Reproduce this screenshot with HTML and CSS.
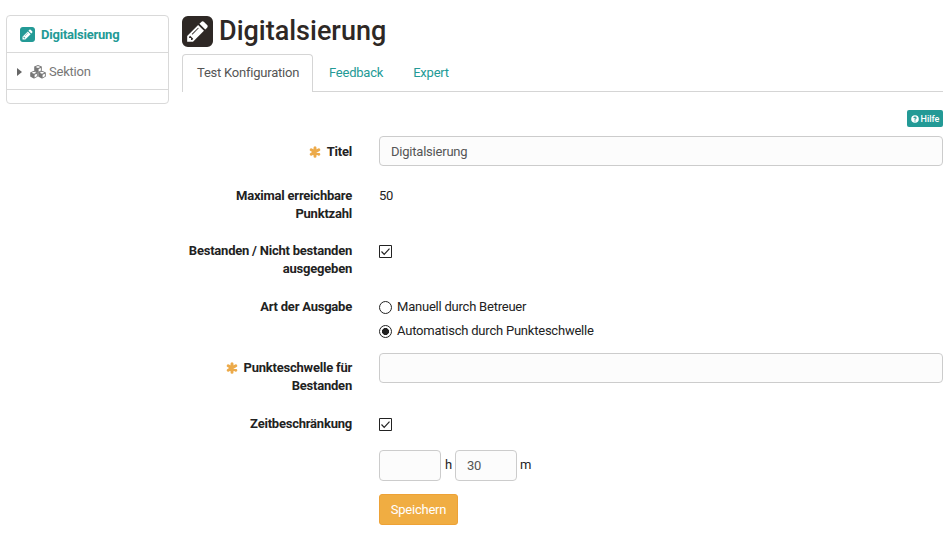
FILE: index.html
```html
<!DOCTYPE html>
<html lang="de">
<head>
<meta charset="utf-8">
<title>Digitalsierung</title>
<link rel="stylesheet" href="styles.css">
</head>
<body>
<svg class="defs" aria-hidden="true">
  <symbol id="pencil" viewBox="0 128 1536 1536"><path d="M404 1108l152 152-52 52h-56v-96h-96v-56zm414-390q14 13-3 30l-291 291q-17 17-30 3-14-13 3-30l291-291q17-17 30-3zm-274 690l544-544-288-288-544 544v288h288zm608-608l92-92q28-28 28-68t-28-68l-152-152q-28-28-68-28t-68 28l-92 92zm384-384v960q0 119-84.5 203.5t-203.5 84.5h-960q-119 0-203.5-84.5t-84.5-203.5v-960q0-119 84.5-203.5t203.5-84.5h960q119 0 203.5 84.5t84.5 203.5z"/></symbol>
  <symbol id="star" viewBox="0 0 12 12"><path d="M6 1.8v8.4M2.2 3.8l7.6 4.4M9.8 3.8L2.2 8.2" stroke="currentColor" stroke-width="3" stroke-linecap="round"/></symbol>
  <symbol id="check" viewBox="0 0 13 13"><path d="M.5.5h12v12H.5z" fill="#fff" stroke="#222"/><path d="M2.5 6.5l2.7 2.8 5.3-5.6" fill="none" stroke="#222" stroke-width="1.2"/></symbol>
  <symbol id="cube" viewBox="0 0 8 8"><path d="M4 0l3.8 1.6v4.2L4 8 .2 5.8V1.6z"/><path d="M1.5 1.9L4 .9l2.5 1L4 3zM4.6 4l2.3-1v2.4L4.6 6.7z" fill="#fff"/></symbol>
</svg>
<div class="page">
  <nav class="menu">
    <a class="item active"><svg class="item-icon"><use href="#pencil"/></svg>Digitalsierung</a>
    <a class="item section"><span class="caret"></span><svg class="cubes" viewBox="0 0 16 14"><use href="#cube" x="4" y="0" width="8" height="8"/><use href="#cube" x="0" y="5.8" width="8" height="8"/><use href="#cube" x="8" y="5.8" width="8" height="8"/></svg>Sektion</a>
    <div class="rest"></div>
  </nav>
  <main class="content">
    <h1><svg class="title-icon"><use href="#pencil"/></svg>Digitalsierung</h1>
    <div class="tabs"><a class="tab current">Test Konfiguration</a><a class="tab feedback">Feedback</a><a class="tab">Expert</a></div>
    <div class="help-row"><a class="help"><svg viewBox="0 0 8 8"><circle cx="4" cy="4" r="3.8" fill="#fff"/><path d="M2.8 3.1Q3 2.1 4 2.1t1.1.9Q5.1 3.7 4 4.3v.4M4 5.5v1" fill="none" stroke="#239a96" stroke-width="1.1"/></svg>Hilfe</a></div>
    <form class="form">
      <label class="first"><svg class="star"><use href="#star"/></svg>Titel</label>
      <div><input class="field" value="Digitalsierung"></div>
      <label>Maximal erreichbare<br>Punktzahl</label>
      <div class="static">50</div>
      <label>Bestanden / Nicht bestanden<br>ausgegeben</label>
      <div class="box"><svg class="check"><use href="#check"/></svg></div>
      <label>Art der Ausgabe</label>
      <div class="radios">
        <span class="radio"><i></i>Manuell durch Betreuer</span>
        <span class="radio"><i class="on"></i>Automatisch durch Punkteschwelle</span>
      </div>
      <label><svg class="star"><use href="#star"/></svg>Punkteschwelle für<br>Bestanden</label>
      <div><input class="field"></div>
      <label>Zeitbeschränkung</label>
      <div class="box"><svg class="check"><use href="#check"/></svg></div>
      <div class="time"><input class="field"><span class="hours">h</span><input class="field" value="30"><span class="minutes">m</span></div>
      <button class="save" type="button">Speichern</button>
    </form>
  </main>
</div>
</body>
</html>
```
FILE: styles.css
```css
* { box-sizing: border-box; }
body { margin: 0; background: #fff; color: #222; font: 13px/18px Roboto, "Liberation Sans", sans-serif; letter-spacing: -0.22px; }
svg { fill: currentColor; flex: none; }
.defs { display: none; }
.page { display: flex; align-items: flex-start; gap: 13px; padding: 15px 6px 0; height: 535px; overflow: hidden; }
.menu { width: 163px; height: 89px; border: 1px solid #d9d9d9; border-radius: 4px; flex: none; }
.item { display: flex; align-items: center; height: 37px; border-bottom: 1px solid #d9d9d9; color: #777; }
.active { padding: 1px 0 0 13px; color: #239a96; font-weight: 700; }
.item-icon { width: 15px; height: 15px; margin-right: 6px; }
.section { padding: 1px 0 0 10px; }
.caret { border: 4px solid transparent; border-left: 5px solid #666; border-right: 0; margin-right: 8px; }
.cubes { width: 16px; height: 14px; margin-right: 3px; }
.content { width: 761px; }
h1 { display: flex; align-items: center; height: 32px; margin: 0; font-size: 27px; font-weight: 500; line-height: 32px; letter-spacing: 0; color: #2e2825; }
.title-icon { width: 31px; height: 31px; margin-right: 6px; }
.tabs { display: flex; height: 38px; margin-top: 7px; border-bottom: 1px solid #d5d5d5; }
.tab { padding: 10px 15px 0; color: #239a96; }
.current { width: 131px; height: 38px; padding: 9px 0 0 14px; border: 1px solid #d5d5d5; border-bottom: 0; border-radius: 4px 4px 0 0; background: #fff; color: #555; }
.feedback { padding-left: 16px; }
.help-row { display: flex; justify-content: flex-end; height: 44px; padding-top: 18px; }
.help { display: flex; align-items: center; justify-content: center; width: 36px; height: 17px; border-radius: 2px; background: #239a96; color: #fff; font-size: 9px; font-weight: 500; letter-spacing: 0; gap: 2px; }
.help svg { width: 8px; height: 8px; }
.form { display: grid; grid-template-columns: 170px 564px; grid-template-rows: 45px 55px 56px 61px 56px 41px 44px 31px; column-gap: 27px; margin: 0; }
label { padding-top: 6px; font-weight: 700; text-align: right; }
.first { padding-top: 7px; }
.star { width: 12px; height: 12px; margin-right: 6px; color: #ecaa4a; vertical-align: -2px; }
.field { display: block; width: 100%; height: 30px; padding: 0 11px; border: 1px solid #ccc; border-radius: 4px; background: #fcfcfc; color: #555; font: inherit; letter-spacing: inherit; }
.static { padding-top: 6px; }
.box { padding-top: 9px; }
.check { display: block; width: 13px; height: 13px; }
.radios { padding-top: 6px; }
.radio { display: flex; align-items: center; gap: 5px; height: 18px; margin-bottom: 6px; }
.radio i { width: 13px; height: 13px; border: 1px solid #222; border-radius: 50%; }
.radio .on { background: radial-gradient(circle, #222 3.2px, #fff 3.8px); }
.time, .save { grid-column: 2; }
.time { display: flex; align-items: flex-start; }
.time .field { width: 62px; height: 31px; }
.hours, .minutes { padding-top: 6px; }
.hours { width: 14px; padding-left: 4px; }
.minutes { padding-left: 3px; }
.save { width: 79px; height: 31px; padding: 0; border: 1px solid #eea236; border-radius: 3px; background: #f0ad42; color: #fff; font: inherit; letter-spacing: inherit; }
```
